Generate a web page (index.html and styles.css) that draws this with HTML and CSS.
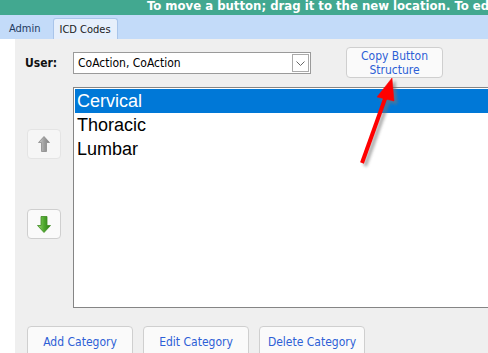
FILE: index.html
```html
<!DOCTYPE html>
<html lang="en">
<head>
    <meta charset="UTF-8">
    <title>ICD Codes</title>
    <link rel="stylesheet" href="styles.css">
</head>
<body>

<div class="hint-bar">To move a button; drag it to the new location. To edit a button; double click it.</div>

<div class="tabs">
    <a class="tab">Admin</a>
    <a class="tab active">ICD Codes</a>
</div>

<div class="page">
    <div class="strip"></div>
    <div class="panel">
        <div class="user-row">
            <label class="user-label">User:</label>
            <div class="select">
                <span>CoAction, CoAction</span>
                <span class="select-arrow">
                    <svg width="9" height="5" viewBox="0 0 9 5"><path d="M0.5 0.5 L4.5 4.5 L8.5 0.5" fill="none" stroke="#666" stroke-width="1"/></svg>
                </span>
            </div>
            <button class="btn copy-btn">Copy Button<br>Structure</button>
        </div>

        <div class="list-row">
            <div class="move-col">
                <button class="btn move-btn up">
                    <svg width="12" height="16" viewBox="0 0 12 16">
                        <defs>
                            <linearGradient id="gUp" x1="0" x2="1">
                                <stop offset="0" stop-color="#d0d0d0"/>
                                <stop offset="0.5" stop-color="#a0a0a0"/>
                                <stop offset="1" stop-color="#808080"/>
                            </linearGradient>
                        </defs>
                        <path d="M6 0.5 L11.5 6.5 L8.5 6.5 L8.5 15.5 L3.5 15.5 L3.5 6.5 L0.5 6.5 Z" fill="url(#gUp)" stroke="#8a8a8a" stroke-width="0.8"/>
                    </svg>
                </button>
                <button class="btn move-btn down">
                    <svg width="14" height="17" viewBox="0 0 14 17">
                        <defs>
                            <linearGradient id="gDown" x1="0" x2="1">
                                <stop offset="0" stop-color="#9ad874"/>
                                <stop offset="0.5" stop-color="#4ea82d"/>
                                <stop offset="1" stop-color="#2d7d18"/>
                            </linearGradient>
                        </defs>
                        <path d="M4 0.5 L10 0.5 L10 9.5 L13.5 9.5 L7 16.5 L0.5 9.5 L4 9.5 Z" fill="url(#gDown)" stroke="#3d8a22" stroke-width="0.8"/>
                    </svg>
                </button>
            </div>
            <div class="listbox">
                <div class="item selected">Cervical</div>
                <div class="item">Thoracic</div>
                <div class="item">Lumbar</div>
            </div>
        </div>

        <div class="actions">
            <button class="btn action-btn">Add Category</button>
            <button class="btn action-btn">Edit Category</button>
            <button class="btn action-btn">Delete Category</button>
        </div>
    </div>
</div>

<!-- callout arrow drawn over the page -->
<svg class="callout" width="488" height="353" viewBox="0 0 488 353">
    <defs>
        <filter id="blur"><feGaussianBlur stdDeviation="1.5"/></filter>
    </defs>
    <g transform="translate(3 3)" filter="url(#blur)" fill="#777" stroke="#777" opacity="0.6">
        <line x1="362" y1="163" x2="386" y2="96" stroke-width="4"/>
        <path d="M392 78 L377 97 L394 101 Z"/>
    </g>
    <g fill="#ff0000" stroke="#ff0000">
        <line x1="362" y1="163" x2="386" y2="96" stroke-width="4"/>
        <path d="M392 78 L377 97 L394 101 Z" stroke-width="0.5"/>
    </g>
</svg>

</body>
</html>
```

FILE: styles.css
```css
body {
    margin: 0;
    width: 488px;
    height: 353px;
    overflow: hidden;
    position: relative;
    font-family: "DejaVu Sans Condensed", "DejaVu Sans", sans-serif;
    font-size: 12px;
    background-color: #efefef;
}
.hint-bar {
    height: 15px;
    background-color: #42a890;
    color: white;
    font-weight: bold;
    font-size: 13px;
    line-height: 11px;
    padding-left: 147px;
    white-space: nowrap;
    overflow: hidden;
}
.tabs {
    height: 24px;
    background-color: #c3dbf9;
    display: flex;
    align-items: flex-end;
    padding-left: 3px;
}
.tab {
    font-size: 11px;
    color: #1e3a5f;
    padding: 0 6px;
    height: 21px;
    line-height: 21px;
    margin-right: 6px;
}
.tab.active {
    background-color: #e6effb;
    border: 1px solid #a9c5ea;
    border-bottom: none;
    border-radius: 3px 3px 0 0;
    height: 20px;
    color: #1b1b1b;
}
.page {
    display: flex;
    height: 314px;
}
.strip {
    width: 15px;
    flex-shrink: 0;
    background-color: white;
}
.panel {
    flex: 1;
    min-width: 0;
    overflow: hidden;
    padding: 8px 0 0 10px;
}
.user-row {
    display: flex;
    align-items: flex-start;
    height: 31px;
}
.user-label {
    font-weight: bold;
    font-size: 12px;
    width: 48px;
    flex-shrink: 0;
    margin-top: 9px;
    color: #111;
}
.select {
    width: 232px;
    flex-shrink: 0;
    height: 20px;
    margin-top: 5px;
    border: 1px solid #9a9a9a;
    background: white;
    display: flex;
    align-items: center;
    justify-content: space-between;
    padding-left: 4px;
    font-size: 12px;
}
.select-arrow {
    width: 15px;
    height: 16px;
    border: 1px solid #aaa;
    margin-right: 1px;
    display: flex;
    align-items: center;
    justify-content: center;
}
.btn {
    font-family: inherit;
    font-size: 12px;
    color: #2d5fd6;
    background-color: #fafafa;
    border: 1px solid #cfcfcf;
    border-radius: 4px;
    padding: 0;
    cursor: pointer;
    flex-shrink: 0;
}
.copy-btn {
    width: 97px;
    height: 31px;
    margin-left: 35px;
    line-height: 14px;
}
.list-row {
    display: flex;
    margin-top: 9px;
}
.move-col {
    width: 48px;
    flex-shrink: 0;
    display: flex;
    flex-direction: column;
    padding-top: 42px;
    padding-left: 2px;
    box-sizing: border-box;
}
.move-btn {
    width: 34px;
    height: 30px;
    display: flex;
    align-items: center;
    justify-content: center;
}
.move-btn.up {
    background-color: #f6f6f6;
    border-color: #e4e4e4;
}
.move-btn.down {
    margin-top: 50px;
}
.listbox {
    width: 430px;
    flex-shrink: 0;
    height: 217px;
    border: 1px solid #858585;
    background: white;
    padding: 1px;
    font-family: "Liberation Sans", Arial, sans-serif;
    font-size: 18px;
}
.item {
    height: 24px;
    line-height: 24px;
    padding-left: 2px;
    color: #000;
}
.item.selected {
    background-color: #0078d7;
    color: white;
}
.actions {
    display: flex;
    gap: 10px;
    margin-top: 18px;
    padding-left: 2px;
}
.action-btn {
    width: 106px;
    height: 31px;
}
.callout {
    position: absolute;
    left: 0;
    top: 0;
    pointer-events: none;
}
```
